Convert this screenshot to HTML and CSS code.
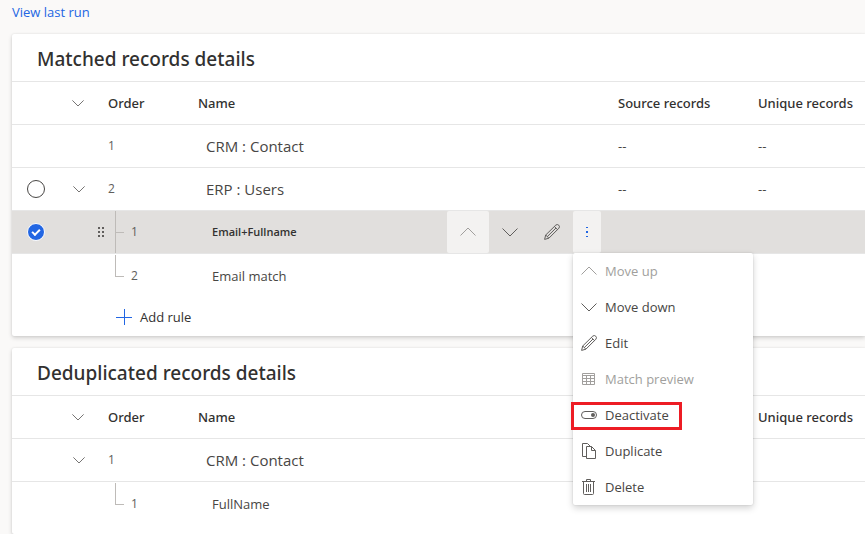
FILE: index.html
```html
<!DOCTYPE html>
<html lang="en">
<head>
<meta charset="utf-8">
<title>Match records</title>
<link rel="stylesheet" href="styles.css">
</head>
<body>
<svg class="sprite" aria-hidden="true">
  <symbol id="chevron-down" viewBox="0 0 16 16"><path d="M.5 4.500 8 12l7.500-7.500"/></symbol>
  <symbol id="chevron-up" viewBox="0 0 16 16"><path d="M.5 11.500 8 4l7.500 7.500"/></symbol>
  <symbol id="pencil" viewBox="0 0 16 16"><path d="M.6 15.400 1.700 11 11.800 1.100a2.200 2.200 0 0 1 3.100 3.100L4.900 14.200zM1.700 11l3.200 3.200M10.400 2.500l3.100 3.100M3.300 12.600 12 4"/></symbol>
  <symbol id="grid" viewBox="0 0 16 16"><path d="M1.500 2.500h12v11h-12zM1.500 4.500h12M1.500 7.500h12M1.500 10.500h12M5.500 4.500v9M9.500 4.500v9"/></symbol>
  <symbol id="toggle" viewBox="0 0 16 16"><rect x=".5" y="4.500" width="15" height="7" rx="3.500"/><circle class="solid" cx="12" cy="8" r="2"/></symbol>
  <symbol id="copy" viewBox="0 0 16 16"><path d="M5.500 13.500h-4V.5h5l3 3M5.500 3.500h5l4 4v8h-9zM10.500 3.500v4h4"/></symbol>
  <symbol id="trash" viewBox="0 0 16 16"><path d="M1 2.500h13M5.500 2.500v-2h4v2M2.500 2.500v12q0 1 1 1h8q1 0 1-1v-12M5.500 5v8M7.500 5v8M9.500 5v8"/></symbol>
  <symbol id="plus" viewBox="0 0 16 16"><path d="M8.500 0v16M0 8.500h16"/></symbol>
  <symbol id="dots" viewBox="0 0 16 16"><path class="solid" d="M7 3h2v1H7zM7 7h2v2H7zM7 12h2v1H7z"/></symbol>
  <symbol id="grip" viewBox="0 0 8 12"><path class="solid" d="M1 1h2v2H1zM5 1h2v2H5zM1 5h2v2H1zM5 5h2v2H5zM1 9h2v2H1zM5 9h2v2H5z"/></symbol>
</svg>

<a class="run-link" href="#">View last run</a>

<main>
  <section class="card">
    <h2>Matched records details</h2>
    <table>
      <colgroup><col class="c-select"><col class="c-expand"><col class="c-order"><col><col class="c-source"><col class="c-unique"></colgroup>
      <thead>
        <tr>
          <th></th>
          <th><button class="expand head" aria-label="Collapse all"><svg><use href="#chevron-down"/></svg></button></th>
          <th>Order</th><th>Name</th><th>Source records</th><th>Unique records</th>
        </tr>
      </thead>
      <tbody>
        <tr><td></td><td></td><td class="order">1</td><td class="entity">CRM : Contact</td><td>--</td><td>--</td></tr>
        <tr>
          <td><input class="pick" type="radio" name="record" aria-label="Select ERP : Users"></td>
          <td><button class="expand" aria-label="Collapse ERP : Users"><svg><use href="#chevron-down"/></svg></button></td>
          <td class="order">2</td><td class="entity">ERP : Users</td><td>--</td><td>--</td>
        </tr>
        <tr class="selected">
          <td><input class="pick" type="radio" name="record" aria-label="Select Email+Fullname" checked></td>
          <td><svg class="grip"><use href="#grip"/></svg></td>
          <td class="order"><div class="node"><span class="branch through"></span>1</div></td>
          <td class="rule">
            <div class="rule-line">
              <span>Email+Fullname</span>
              <div class="actions">
                <button class="idle" aria-label="Move up" disabled><svg><use href="#chevron-up"/></svg></button>
                <button aria-label="Move down"><svg><use href="#chevron-down"/></svg></button>
                <button aria-label="Edit"><svg><use href="#pencil"/></svg></button>
                <button class="more" aria-label="More actions"><svg><use href="#dots"/></svg></button>
                <div class="menu" role="menu">
                  <button role="menuitem" disabled><svg><use href="#chevron-up"/></svg>Move up</button>
                  <button role="menuitem"><svg><use href="#chevron-down"/></svg>Move down</button>
                  <button role="menuitem"><svg><use href="#pencil"/></svg>Edit</button>
                  <button role="menuitem" disabled><svg><use href="#grid"/></svg>Match preview</button>
                  <button role="menuitem" class="marked"><svg><use href="#toggle"/></svg>Deactivate</button>
                  <button role="menuitem"><svg><use href="#copy"/></svg>Duplicate</button>
                  <button role="menuitem"><svg><use href="#trash"/></svg>Delete</button>
                </div>
              </div>
            </div>
          </td>
          <td></td><td></td>
        </tr>
        <tr class="last"><td></td><td></td><td class="order"><div class="node"><span class="branch"></span>2</div></td><td class="rule">Email match</td><td></td><td></td></tr>
      </tbody>
    </table>
    <button class="add"><svg><use href="#plus"/></svg>Add rule</button>
  </section>

  <section class="card">
    <h2>Deduplicated records details</h2>
    <table>
      <colgroup><col class="c-select"><col class="c-expand"><col class="c-order"><col><col class="c-source"><col class="c-unique"></colgroup>
      <thead>
        <tr>
          <th></th>
          <th><button class="expand head" aria-label="Collapse all"><svg><use href="#chevron-down"/></svg></button></th>
          <th>Order</th><th>Name</th><th></th><th>Unique records</th>
        </tr>
      </thead>
      <tbody>
        <tr>
          <td></td>
          <td><button class="expand" aria-label="Collapse CRM : Contact"><svg><use href="#chevron-down"/></svg></button></td>
          <td class="order">1</td><td class="entity">CRM : Contact</td><td></td><td></td>
        </tr>
        <tr class="last"><td></td><td></td><td class="order"><div class="node"><span class="branch"></span>1</div></td><td class="rule">FullName</td><td></td><td></td></tr>
      </tbody>
    </table>
  </section>
</main>
</body>
</html>
```
FILE: styles.css
```css
*, *::before, *::after { box-sizing: border-box; }

body {
  margin: 0;
  height: 100vh;
  overflow: hidden;
  display: flex;
  flex-direction: column;
  background: #faf9f8;
  color: #323130;
  font: 13px/20px "Open Sans", "Noto Sans", sans-serif;
}

.sprite { display: none; }

svg {
  width: 16px;
  height: 16px;
  flex: none;
  display: block;
  fill: none;
  stroke: currentColor;
  stroke-width: 1;
}

.solid { fill: currentColor; stroke: none; }

button {
  padding: 0;
  border: 0;
  background: none;
  color: inherit;
  font: inherit;
}

.run-link {
  margin: 2px 12px 12px;
  color: #2266e3;
  text-decoration: none;
}

main {
  flex: 1;
  display: flex;
  flex-direction: column;
  gap: 12px;
  margin-left: 12px;
}

.card {
  background: #fff;
  border-radius: 2px 0 0 2px;
  box-shadow: 0 2px 4px rgba(0, 0, 0, .16), 0 0 2px rgba(0, 0, 0, .1);
}

.card:last-child { flex: 1; }

h2 {
  margin: 0;
  height: 48px;
  padding: 2px 25px 0;
  border-bottom: 1px solid #e6e6e6;
  font-family: "Noto Sans", "Open Sans", sans-serif;
  font-size: 19px;
  font-weight: 500;
  line-height: 46px;
}

table {
  width: 100%;
  border-collapse: separate;
  border-spacing: 0;
  table-layout: fixed;
}

.c-select, .c-expand { width: 48px; }
.c-order { width: 90px; }
.c-source { width: 140px; }
.c-unique { width: 107px; }

th, td {
  height: 43px;
  padding: 0;
  border-bottom: 1px solid #e6e6e6;
  text-align: left;
  white-space: nowrap;
}

th {
  font-family: "Noto Sans", "Open Sans", sans-serif;
  font-weight: 500;
}
td { color: #484644; }
.last td { border-bottom: 0; }
td.order { color: #605e5c; font-size: 12px; }
.entity { padding-left: 8px; font-size: 15px; }
.rule { padding-left: 14px; }

.expand { display: block; margin-left: 13px; color: #484644; }
.expand.head { margin-left: 12px; }
.expand svg { width: 12px; height: 12px; }

.pick {
  appearance: none;
  display: block;
  width: 18px;
  height: 18px;
  margin: 0 0 0 15px;
  border: 1px solid #484644;
  border-radius: 50%;
  background: #fff;
}

.pick:checked {
  display: grid;
  place-items: center;
  border: 1px solid #fff;
  background: #2266e3;
}

.pick:checked::after {
  content: "";
  width: 8px;
  height: 5px;
  margin-bottom: 2px;
  border: solid #fff;
  border-width: 0 0 2px 2px;
  transform: rotate(-45deg);
}

.selected td { background: #e1dfdd; }

.grip { width: 8px; height: 12px; margin-left: 37px; color: #605e5c; }

.node { display: flex; align-items: center; height: 42px; padding-left: 7px; }

.branch {
  align-self: flex-start;
  width: 9px;
  height: 22px;
  margin-right: 7px;
  border: solid #bebbb8;
  border-width: 0 0 1px 1px;
}

.branch.through {
  height: 42px;
  border-bottom: 0;
  background: linear-gradient(#bebbb8, #bebbb8) 0 21px / 9px 1px no-repeat;
}

.rule-line { display: flex; align-items: center; justify-content: space-between; }
.rule-line > span { font-size: 11px; font-weight: 600; color: #323130; }

.actions { position: relative; display: flex; height: 42px; margin-right: 17px; }
.actions > button {
  display: grid;
  place-items: center;
  width: 42px;
  border-radius: 2px;
  color: #605e5c;
}
.actions > .idle { background: #f3f2f1; color: #a19f9d; }
.actions > .more { width: 28px; background: #f3f2f1; color: #2266e3; }

.menu {
  position: absolute;
  z-index: 1;
  top: 42px;
  left: 126px;
  width: 180px;
  background: #fff;
  border-radius: 2px;
  box-shadow: 0 3px 7px rgba(0, 0, 0, .18), 0 0 2px rgba(0, 0, 0, .14);
}

.menu button {
  position: relative;
  display: flex;
  align-items: center;
  gap: 8px;
  width: 100%;
  height: 36px;
  padding: 0 8px;
}

.menu svg { color: #605e5c; }
.menu button:disabled, .menu button:disabled svg { color: #a19f9d; }

.marked::after {
  content: "";
  position: absolute;
  top: 5px;
  left: -2px;
  width: 111px;
  height: 28px;
  border: 3px solid #ed1c24;
}

.add {
  display: flex;
  align-items: center;
  gap: 8px;
  height: 39px;
  margin-left: 104px;
}
.add svg { color: #2266e3; }
```
